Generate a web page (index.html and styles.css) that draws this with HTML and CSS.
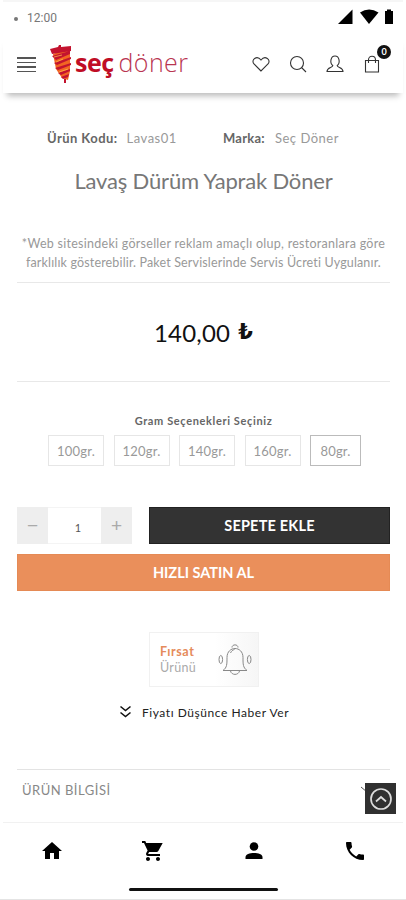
FILE: index.html
```html
<!DOCTYPE html>
<html lang="tr">
<head>
<meta charset="utf-8">
<meta name="viewport" content="width=device-width, initial-scale=1">
<title>Seç Döner</title>
<link rel="stylesheet" href="styles.css">
</head>
<body>
<div class="status">
  <span class="dot"></span><span class="time">12:00</span>
  <svg class="signals" width="58" height="17" viewBox="0 0 58 17"><path d="M1 16 15.500 1.500V16Z"/><path d="M23 4.500Q32 -1.500 41.500 4.500L32 16Z"/><path d="M48 3h2V1.500h4V3h2v13h-8Z"/></svg>
</div>
<header class="header">
  <span class="menu"><i></i><i></i><i></i><i></i></span>
  <div class="logo">
    <svg width="22" height="40" viewBox="0 0 22 40">
      <path fill="#f26522" d="M3 10 20 4 20 27 18 36 12 34 6 25Z"/>
      <path fill="#c3132f" d="M0 5 8 3 9 1h2v2l10-1v5L2 10ZM2 12l18-5v3L6 16ZM4 19l17-6v2L7 21ZM5 24l16-5v2L8 26ZM8 29l12-4v2l-9 4ZM11 33l8-3-1 3-5 2ZM14 35h2v4h-2Z"/>
      <path stroke="#fbb34c" stroke-width=".8" fill="none" d="m4 13 8-2M6 18l7-3M9 28l9-3"/>
    </svg>
    <b>seç</b><span>döner</span>
  </div>
  <div class="tools">
    <svg width="20" height="20" viewBox="0 0 20 20"><path d="M10 17 3 10C-.5 5.500 6 1 10 6c4-5 10.500-.5 7 4Z"/></svg>
    <svg width="20" height="20" viewBox="0 0 20 20"><circle cx="9" cy="9" r="6.500"/><path d="m13.500 13.500 4.500 4.500"/></svg>
    <svg width="20" height="20" viewBox="0 0 20 20"><path d="M7.800 11.500C4.500 9 5.500 2 10 2s5.500 7 2.200 9.500c0 2.500 5.800 1.500 5.800 6H2c0-4.500 5.800-3.500 5.800-6Z"/></svg>
    <span class="bag"><svg width="20" height="20" viewBox="0 0 20 20"><path d="M3.500 6.500h13v11.500h-13ZM6.500 9V6c0-5 7-5 7 0v3"/></svg><b class="badge">0</b></span>
  </div>
</header>
<main class="main">
  <div class="meta"><p class="code"><b>Ürün Kodu:</b><span>Lavas01</span></p><p class="brand"><b>Marka:</b><span>Seç Döner</span></p></div>
  <h1 class="title">Lavaş Dürüm Yaprak Döner</h1>
  <div class="note"><p class="n1">*Web sitesindeki görseller reklam amaçlı olup, restoranlara göre</p><p class="n2">farklılık gösterebilir. Paket Servislerinde Servis Ücreti Uygulanır.</p></div>
  <div class="price"><span>140,00</span><b>₺</b></div>
  <h2 class="label">Gram Seçenekleri Seçiniz</h2>
  <div class="options"><span>100gr.</span><span>120gr.</span><span>140gr.</span><span>160gr.</span><span class="selected">80gr.</span></div>
  <div class="buy">
    <div class="qty"><span class="step">−</span><span class="num">1</span><span class="step">+</span></div>
    <div class="add">SEPETE EKLE</div>
  </div>
  <div class="quick">HIZLI SATIN AL</div>
  <div class="deal">
    <p><b>Fırsat</b><span>Ürünü</span></p>
    <svg width="34" height="32" viewBox="0 0 34 32"><path d="M5 26.500c4-3 4-6 4-13 0-12 16-12 16 0 0 7 0 10 4 13ZM14 3.500c0-3.500 6-3.500 6 0M12.500 27c1 4.500 8 4.500 9 0M12.500 9c1-2 2-3 4-3.500"/><ellipse cx="2.800" cy="15.500" rx="1.800" ry="4"/><ellipse cx="31.200" cy="15.500" rx="1.800" ry="4"/></svg>
  </div>
  <div class="notify"><svg width="13" height="14" viewBox="0 0 13 14"><path d="m1.500 1.500 5 4 5-4M1.500 7.500l5 4 5-4"/></svg><span>Fiyatı Düşünce Haber Ver</span></div>
  <div class="accordion"><span>ÜRÜN BİLGİSİ</span>
    <svg class="chev" width="7" height="7" viewBox="0 0 7 7"><path d="m1 1 6 5"/></svg>
    <div class="top"><svg width="24" height="24" viewBox="0 0 24 24"><circle cx="12" cy="12" r="10"/><path d="m7 14.500 5-4.500 5 4.500"/></svg></div>
  </div>
</main>
<nav class="nav">
  <svg width="24" height="24" viewBox="0 0 24 24"><path d="M10 20v-6h4v6h5v-8h3L12 3 2 12h3v8z"/></svg>
  <svg width="24" height="24" viewBox="0 0 24 24"><path d="M7 18c-1.100 0-1.990.9-1.990 2S5.900 22 7 22s2-.9 2-2-.9-2-2-2zM1 2v2h2l3.600 7.590-1.350 2.450C4.520 15.370 5.480 17 7 17h12v-2H7.420c-.14 0-.25-.11-.25-.25l.03-.12.900-1.630h7.450c.75 0 1.410-.41 1.750-1.030L21.700 4H5.210l-.94-2H1zm16 16c-1.100 0-1.990.9-1.990 2s.89 2 1.990 2 2-.9 2-2-.9-2-2-2z"/></svg>
  <svg width="24" height="24" viewBox="0 0 24 24"><circle cx="12" cy="7.500" r="4.300"/><path d="M3.500 20v-2c0-5.500 17-5.500 17 0v2Z"/></svg>
  <svg width="24" height="24" viewBox="0 0 24 24"><path d="M6.620 10.790c1.440 2.830 3.760 5.140 6.590 6.590l2.200-2.200c.27-.27.670-.36 1.020-.24 1.120.37 2.330.57 3.570.57.550 0 1 .45 1 1V20c0 .55-.45 1-1 1C10.610 21 3 13.390 3 4c0-.55.450-1 1-1h3.500c.55 0 1 .45 1 1 0 1.250.2 2.450.57 3.570.11.350.03.740-.25 1.020z"/></svg>
</nav>
<div class="home"></div>
</body>
</html>
```
FILE: styles.css
```css
* { box-sizing: border-box; margin: 0; }
body {
  height: 900px; overflow: hidden; display: flex; flex-direction: column;
  padding: 0 3px; background: #fff; color: #777; font-family: Lato, sans-serif;
  white-space: nowrap; border-bottom: 1px solid #e4e4e4;
}
svg { display: block; flex: none; }
.status { height: 35px; flex: none; display: flex; align-items: center; padding: 0 11px; border-top: 2px solid #f6f6f6; }
.dot { width: 4px; height: 4px; border-radius: 2px; background: #777; margin-right: 9px; }
.time { font: 12px/16px Roboto, sans-serif; color: #777; margin-top: -2px; }
.signals { margin-left: auto; margin-top: -4px; margin-right: -3px; fill: #000; }
.header { height: 58px; flex: none; display: flex; align-items: center; padding: 0 21px 0 14px; box-shadow: 0 7px 6px -4px #bbb; }
.menu { width: 19px; display: grid; gap: 3px; margin-top: 1px; }
.menu i { height: 1.500px; background: #555; }
.logo { display: flex; align-items: center; margin-left: 14px; font: 25px/40px "Open Sans", sans-serif; }
.logo b { color: #c00d25; margin: -4px 0 0 3px; letter-spacing: -.5px; }
.logo span { margin: -4px 0 0 5px; color: #b93551; font-weight: 300; letter-spacing: .4px; }
.tools { display: flex; gap: 17px; margin-left: auto; fill: none; stroke: #333; stroke-width: 1.100; }
.bag { position: relative; }
.badge { position: absolute; left: 15px; top: -9px; width: 14px; height: 14px; border-radius: 7px; background: #111; color: #fff; font-size: 9px; line-height: 14px; text-align: center; }
.main { flex: none; height: 729px; padding: 0 13px 0 14px; display: flex; flex-direction: column; }
.meta { height: 20px; margin-top: 35px; display: flex; padding-left: 30px; font-size: 13px; line-height: 20px; color: #999; letter-spacing: .5px; }
.meta b { color: #666; margin-right: 9px; letter-spacing: .45px; }
.brand b { letter-spacing: .25px; margin-right: 10px; }
.code { width: 176px; }
.title { margin-top: 17px; font-size: 22px; line-height: 32px; height: 32px; font-weight: 400; color: #777; text-align: center; letter-spacing: -.17px; }
.note { height: 49px; margin-top: 37px; padding-top: 1px; font-size: 12.500px; line-height: 18.500px; text-align: center; color: #999; border-bottom: 1px solid #e8e8e8; }
.n1 { letter-spacing: .27px; }
.n2 { letter-spacing: .15px; }
.price { height: 99px; display: flex; align-items: center; justify-content: center; gap: 8px; border-bottom: 1px solid #e8e8e8; color: #111; font-size: 24px; letter-spacing: .2px; }
.price b { font: bold 21px "DejaVu Sans", sans-serif; }
.label { height: 20px; margin-top: 29px; font-size: 11px; line-height: 20px; text-align: center; color: #666; letter-spacing: .63px; }
.options { height: 31px; margin: 4px 29px 0 31px; display: flex; justify-content: space-between; color: #999; font-size: 13px; line-height: 30px; text-align: center; letter-spacing: .2px; }
.options span { width: 56px; border: 1px solid #e6e6e6; }
.options .selected { width: 51px; border-color: #bbb; }
.buy { height: 37px; margin-top: 41px; display: flex; gap: 17px; }
.qty { width: 115px; display: flex; line-height: 37px; text-align: center; }
.step { width: 31px; background: #eee; color: #aaa; font: 19px/38px "Liberation Sans", sans-serif; }
.num { flex: 1; border-block: 1px solid #f4f4f4; color: #555; font-size: 11px; padding: 1px 0 0 7px; }
.add { flex: 1; background: #333; border: 1px solid #222; letter-spacing: .2px; }
.add, .quick { color: #fff; text-align: center; font-size: 14.500px; font-weight: 700; line-height: 35px; }
.quick { height: 37px; margin-top: 10px; background: #ea8f5b; border: 1px solid #e58a55; }
.deal { width: 110px; height: 55px; margin: 41px 0 0 132px; padding: 0 6px 0 10px; display: flex; align-items: center; justify-content: space-between; border: 1px solid #f1f1f1; background: linear-gradient(90deg, #fff 60%, #f6f6f6); }
.deal p { display: grid; font-size: 12.500px; line-height: 16px; color: #aaa; letter-spacing: .3px; }
.deal b { color: #e58b5b; letter-spacing: .6px; }
.deal svg { fill: none; stroke: #888; stroke-width: 1; }
.notify { height: 20px; margin-top: 15px; display: flex; align-items: center; gap: 10px; padding-left: 102px; font-size: 12px; color: #222; letter-spacing: .55px; }
.notify svg { fill: none; stroke: #111; stroke-width: 1.600; }
.accordion { position: relative; margin-top: 47px; height: 53px; border-top: 1px solid #e3e3e3; padding: 10px 5px; font-size: 13px; line-height: 20px; color: #888; letter-spacing: .5px; }
.chev { position: absolute; left: 343px; top: 16px; stroke: #555; }
.top { position: absolute; right: -6px; top: 13px; width: 31px; height: 31px; background: #303030; display: grid; place-items: center; }
.top svg { fill: none; stroke: #ddd; stroke-width: 1.700; }
.nav { height: 57px; flex: none; display: flex; justify-content: space-between; align-items: center; padding: 0 36px 0 37px; border-top: 1px solid #f1f1f1; fill: #000; }
.home { width: 149px; height: 3px; margin: 9px auto 0 126px; flex: none; border-radius: 2px; background: #111; }
```
